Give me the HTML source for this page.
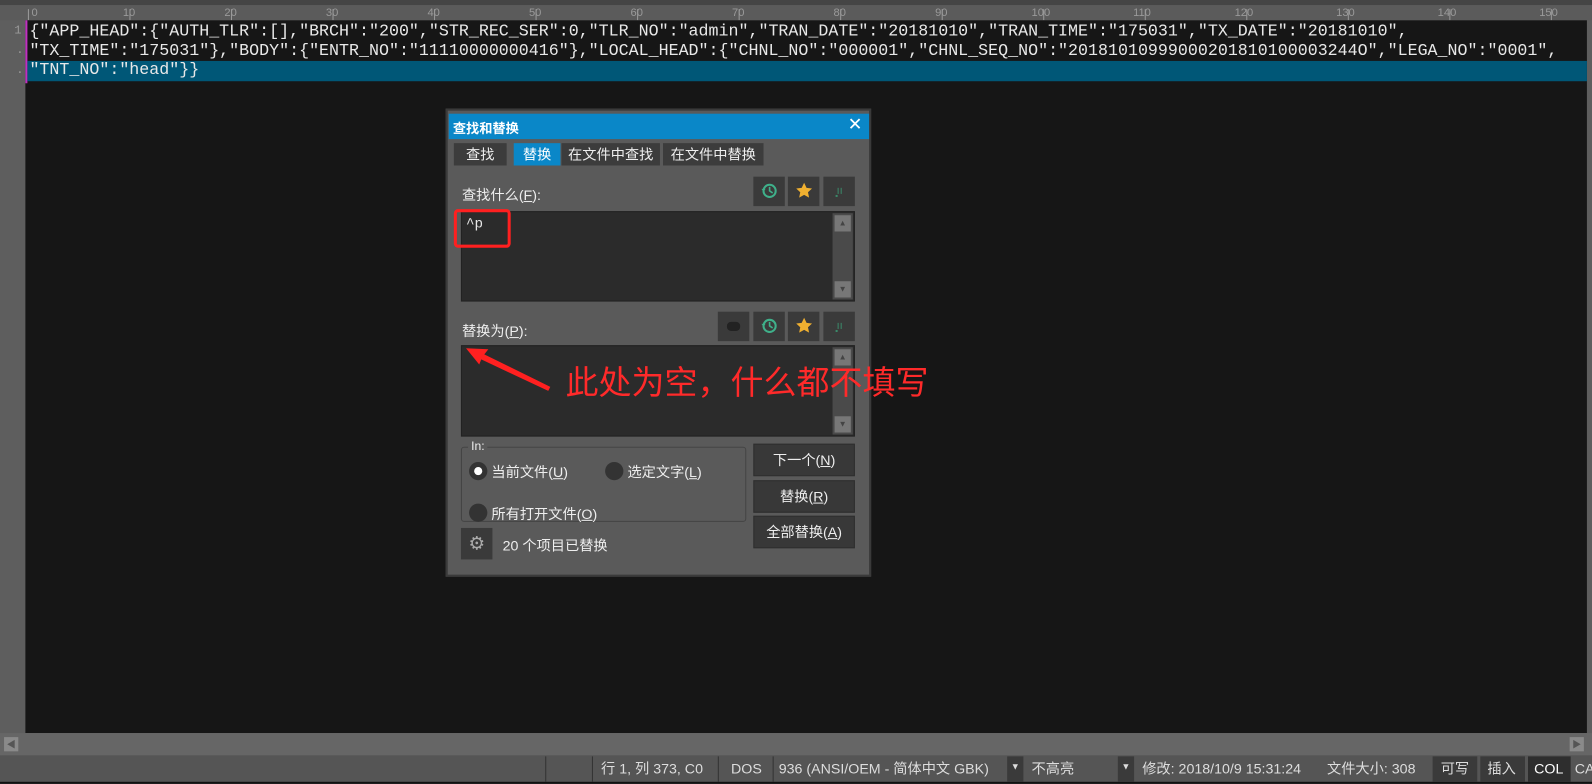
<!DOCTYPE html>
<html><head><meta charset="utf-8"><style>
*{margin:0;padding:0;box-sizing:border-box}
body{width:1592px;height:784px;background:#5e5e5e;position:relative;overflow:hidden;font-family:"Liberation Sans","Noto Sans CJK SC",sans-serif}
#w{position:absolute;left:0;top:0;width:1568px;height:772px;transform:scale(1.0153);transform-origin:0 0}
.a{position:absolute}
.code{font-family:"Liberation Mono",monospace;font-size:16.4px;color:#e8e8e8;white-space:pre;line-height:19px}
.btn{background:#383838;border:1px solid #2e2e2e;color:#eee;font-size:14px;text-align:center}
.sb{color:#ddd;font-size:14px;top:746px;height:22px;line-height:22px}
</style></head><body><div id="w">
<div class="a" style="left:0;top:0;width:1568px;height:5px;background:#454545"></div>
<div class="a" style="left:0;top:5px;width:1568px;height:15px;background:#5b5b5b"></div>
<svg class="a" style="left:0;top:5px" width="1568" height="15">
<g stroke="#9a9a9a" stroke-width="1">
<path d="M28 4V15M128 4V15M228 4V15M328 4V15M428 4V15M528 4V15M628 4V15M728 4V15M828 4V15M928 4V15M1028 4V15M1128 4V15M1228 4V15M1328 4V15M1428 4V15M1528 4V15"/>
</g>
<g fill="#9a9a9a" font-family="Liberation Sans" font-size="11">
<text x="31" y="11">0</text><text x="121" y="11">10</text><text x="221" y="11">20</text><text x="321" y="11">30</text><text x="421" y="11">40</text><text x="521" y="11">50</text><text x="621" y="11">60</text><text x="721" y="11">70</text><text x="821" y="11">80</text><text x="921" y="11">90</text><text x="1016" y="11">100</text><text x="1116" y="11">110</text><text x="1216" y="11">120</text><text x="1316" y="11">130</text><text x="1416" y="11">140</text><text x="1516" y="11">150</text>
</g>
</svg>
<div class="a" style="left:25px;top:20px;width:1538px;height:702px;background:#161616"></div>
<div class="a" style="left:25px;top:20px;width:2px;height:62px;background:#c030c0"></div>
<div class="a" style="left:27px;top:60px;width:1536px;height:20px;background:#005777"></div>
<div class="a code" style="left:14px;top:21px;color:#999;font-size:12px">1</div>
<div class="a code" style="left:16px;top:40px;color:#999;font-size:12px">.</div>
<div class="a code" style="left:16px;top:60px;color:#999;font-size:12px">.</div>
<div class="a code" style="left:29px;top:21px">{"APP_HEAD":{"AUTH_TLR":[],"BRCH":"200","STR_REC_SER":0,"TLR_NO":"admin","TRAN_DATE":"20181010","TRAN_TIME":"175031","TX_DATE":"20181010",
"TX_TIME":"175031"},"BODY":{"ENTR_NO":"11110000000416"},"LOCAL_HEAD":{"CHNL_NO":"000001","CHNL_SEQ_NO":"20181010999000201810100003244O","LEGA_NO":"0001",
"TNT_NO":"head"}}</div>
<div class="a" style="left:0;top:722px;width:1568px;height:22px;background:#666"></div>
<div class="a" style="left:4px;top:726px;width:14px;height:14px;background:#8a8a8a;color:#555;font-size:9px;line-height:14px;text-align:center">◀</div>
<div class="a" style="left:1546px;top:726px;width:14px;height:14px;background:#8a8a8a;color:#555;font-size:9px;line-height:14px;text-align:center">▶</div>
<div class="a" style="left:0;top:744px;width:1568px;height:26px;background:#555"></div>
<div class="a" style="left:0;top:770px;width:1568px;height:2px;background:#111"></div>
<div class="a" style="left:537px;top:745px;width:1px;height:25px;background:#333"></div>
<div class="a" style="left:583px;top:745px;width:1px;height:25px;background:#333"></div>
<div class="a sb" style="left:592px">行 1, 列 373, C0</div>
<div class="a" style="left:707px;top:745px;width:1px;height:25px;background:#333"></div>
<div class="a sb" style="left:720px">DOS</div>
<div class="a" style="left:761px;top:745px;width:1px;height:25px;background:#333"></div>
<div class="a sb" style="left:767px">936 (ANSI/OEM - 简体中文 GBK)</div>
<div class="a" style="left:992px;top:745px;width:16px;height:25px;background:#3a3a3a;color:#ddd;font-size:9px;text-align:center;line-height:20px">▼</div>
<div class="a sb" style="left:1016px">不高亮</div>
<div class="a" style="left:1101px;top:745px;width:16px;height:25px;background:#3a3a3a;color:#ddd;font-size:9px;text-align:center;line-height:20px">▼</div>
<div class="a sb" style="left:1125px">修改:  2018/10/9 15:31:24</div>
<div class="a sb" style="left:1307px">文件大小:  308</div>
<div class="a" style="left:1411px;top:745px;width:44px;height:25px;background:#3a3a3a"></div>
<div class="a sb" style="left:1419px">可写</div>
<div class="a" style="left:1458px;top:745px;width:44px;height:25px;background:#3a3a3a"></div>
<div class="a sb" style="left:1465px">插入</div>
<div class="a" style="left:1505px;top:745px;width:42px;height:25px;background:#2e2e2e"></div>
<div class="a sb" style="left:1511px;color:#fff">COL</div>
<div class="a sb" style="left:1551px">CA</div>
<!-- dialog -->
<div class="a" style="left:439px;top:107px;width:419px;height:461px;background:#5a5a5a;border:2px solid #3a3a3a"></div>
<div class="a" style="left:442px;top:112px;width:414px;height:25px;background:#0a87c8"></div>
<div class="a" style="left:446px;top:116px;color:#fff;font-size:13px;font-weight:bold">查找和替换</div>
<div class="a" style="left:835px;top:113px;color:#fff;font-size:17px">✕</div>
<div class="a" style="left:447px;top:141px;width:52px;height:22px;background:#3c3c3c;color:#eee;font-size:14px;text-align:center;line-height:22px">查找</div>
<div class="a" style="left:506px;top:141px;width:46px;height:22px;background:#0a87c8;color:#fff;font-size:14px;text-align:center;line-height:22px">替换</div>
<div class="a" style="left:553px;top:141px;width:97px;height:22px;background:#3c3c3c;color:#eee;font-size:14px;text-align:center;line-height:22px">在文件中查找</div>
<div class="a" style="left:653px;top:141px;width:99px;height:22px;background:#3c3c3c;color:#eee;font-size:14px;text-align:center;line-height:22px">在文件中替换</div>
<div class="a" style="left:455px;top:182px;color:#eee;font-size:14px">查找什么(<u>F</u>):</div>
<div class="a" style="left:742px;top:174px;width:31px;height:29px;background:#3a3a3a"></div>
<div class="a" style="left:776px;top:174px;width:31px;height:29px;background:#3a3a3a"></div>
<div class="a" style="left:811px;top:174px;width:31px;height:29px;background:#3a3a3a"></div>
<svg class="a" style="left:742px;top:174px" width="100" height="29">
<circle cx="16" cy="14" r="6" fill="none" stroke="#3fb08a" stroke-width="2"/><path d="M16 10v4l3 2" stroke="#3fb08a" stroke-width="1.6" fill="none"/><path d="M8 12l2 3 2-3z" fill="#3fb08a"/>
<path d="M50 6l2.4 5 5.4.6-4 3.7 1.1 5.3-4.9-2.7-4.9 2.7 1.1-5.3-4-3.7 5.4-.6z" fill="#f0b030"/>
<g fill="#3a8a6a"><rect x="83" y="11" width="1" height="6"/><rect x="86" y="11" width="1" height="6"/><rect x="81" y="18" width="2" height="2"/></g>
</svg>
<div class="a" style="left:454px;top:208px;width:388px;height:89px;background:#2b2b2b;border:1px solid #222"></div>
<div class="a" style="left:820px;top:210px;width:20px;height:85px;background:#4a4a4a"></div>
<div class="a" style="left:822px;top:212px;width:16px;height:16px;background:#777;color:#444;font-size:8px;text-align:center;line-height:16px">▲</div>
<div class="a" style="left:822px;top:277px;width:16px;height:16px;background:#777;color:#444;font-size:8px;text-align:center;line-height:16px">▼</div>
<div class="a code" style="left:459px;top:212px;font-size:14px">^p</div>
<div class="a" style="left:447px;top:206px;width:56px;height:38px;border:3px solid #ff2020;border-radius:4px"></div>
<div class="a" style="left:455px;top:316px;color:#eee;font-size:14px">替换为(<u>P</u>):</div>
<div class="a" style="left:707px;top:307px;width:31px;height:29px;background:#3a3a3a"></div>
<div class="a" style="left:742px;top:307px;width:31px;height:29px;background:#3a3a3a"></div>
<div class="a" style="left:776px;top:307px;width:31px;height:29px;background:#3a3a3a"></div>
<div class="a" style="left:811px;top:307px;width:31px;height:29px;background:#3a3a3a"></div>
<svg class="a" style="left:707px;top:307px" width="135" height="29">
<rect x="9" y="10" width="13" height="9" rx="4" fill="#222"/>
<circle cx="51" cy="14" r="6" fill="none" stroke="#3fb08a" stroke-width="2"/><path d="M51 10v4l3 2" stroke="#3fb08a" stroke-width="1.6" fill="none"/><path d="M43 12l2 3 2-3z" fill="#3fb08a"/>
<path d="M85 6l2.4 5 5.4.6-4 3.7 1.1 5.3-4.9-2.7-4.9 2.7 1.1-5.3-4-3.7 5.4-.6z" fill="#f0b030"/>
<g fill="#3a8a6a"><rect x="118" y="11" width="1" height="6"/><rect x="121" y="11" width="1" height="6"/><rect x="116" y="18" width="2" height="2"/></g>
</svg>
<div class="a" style="left:454px;top:340px;width:388px;height:90px;background:#2b2b2b;border:1px solid #222"></div>
<div class="a" style="left:820px;top:342px;width:20px;height:86px;background:#4a4a4a"></div>
<div class="a" style="left:822px;top:344px;width:16px;height:16px;background:#777;color:#444;font-size:8px;text-align:center;line-height:16px">▲</div>
<div class="a" style="left:822px;top:410px;width:16px;height:16px;background:#777;color:#444;font-size:8px;text-align:center;line-height:16px">▼</div>
<svg class="a" style="left:450px;top:335px" width="100" height="60">
<path d="M9 8L31 9 27 14 92 46 90 50 24 19 22 24z" fill="#ff2020"/>
</svg>
<div class="a" style="left:557px;top:355px;color:#ff2a2a;font-size:32.5px;font-family:'Noto Sans CJK SC',sans-serif;line-height:40px">此处为空，什么都不填写</div>
<div class="a" style="left:454px;top:440px;width:281px;height:74px;border:1px solid #444;border-radius:3px"></div>
<div class="a" style="left:461px;top:432px;background:#5a5a5a;color:#eee;font-size:12px;padding:0 3px">In:</div>
<div class="a" style="left:462px;top:455px;width:18px;height:18px;border-radius:50%;background:#333"></div>
<div class="a" style="left:467px;top:460px;width:8px;height:8px;border-radius:50%;background:#fff"></div>
<div class="a" style="left:484px;top:455px;color:#eee;font-size:14px">当前文件(<u>U</u>)</div>
<div class="a" style="left:596px;top:455px;width:18px;height:18px;border-radius:50%;background:#333"></div>
<div class="a" style="left:618px;top:455px;color:#eee;font-size:14px">选定文字(<u>L</u>)</div>
<div class="a" style="left:462px;top:496px;width:18px;height:18px;border-radius:50%;background:#333"></div>
<div class="a" style="left:484px;top:496px;color:#eee;font-size:14px">所有打开文件(<u>O</u>)</div>
<div class="a btn" style="left:742px;top:437px;width:100px;height:32px;line-height:30px">下一个(<u>N</u>)</div>
<div class="a btn" style="left:742px;top:473px;width:100px;height:32px;line-height:30px">替换(<u>R</u>)</div>
<div class="a btn" style="left:742px;top:508px;width:100px;height:32px;line-height:30px">全部替换(<u>A</u>)</div>
<div class="a" style="left:454px;top:520px;width:31px;height:31px;background:#3a3a3a;color:#aaa;font-size:18px;text-align:center;line-height:31px">⚙</div>
<div class="a" style="left:495px;top:527px;color:#eee;font-size:14px">20 个项目已替换</div>
</div></body></html>
